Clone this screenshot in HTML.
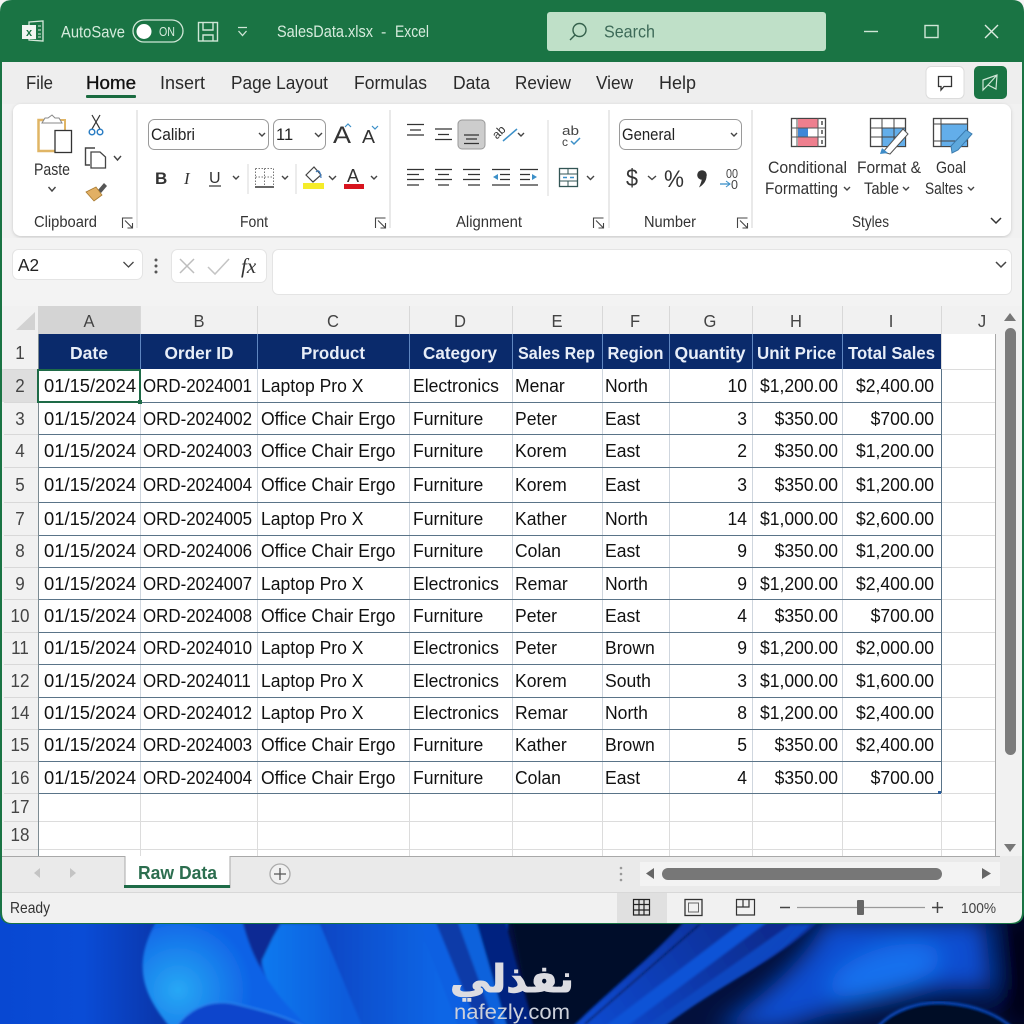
<!DOCTYPE html>
<html><head><meta charset="utf-8"><title>SalesData.xlsx - Excel</title>
<style>
html,body{margin:0;padding:0;background:#fff}
svg{display:block}
text{font-family:"Liberation Sans",sans-serif;fill:#222;font-size:17px;white-space:pre}
.w{fill:#d6ebdd;font-size:17px}
.m{font-size:18.5px;fill:#2a2a2a}
.r{font-size:16.5px;fill:#333}
.g{font-size:15.5px;fill:#333}
.d{font-size:18.4px;fill:#111}
.o{font-size:18.6px;fill:#111;transform-box:fill-box;transform-origin:0 50%;transform:scaleX(.91)}
.t{font-size:18.6px;fill:#111;transform-box:fill-box;transform-origin:0 50%;transform:scaleX(.945)}
.n{font-size:18.6px;fill:#111;text-anchor:end;transform-box:fill-box;transform-origin:100% 50%;transform:scaleX(.943)}
.h{font-size:17.8px;font-weight:bold;fill:#e8eef8;text-anchor:middle}
.ch{font-size:18px;fill:#444;text-anchor:middle;transform-box:fill-box;transform-origin:50% 50%;transform:scaleX(.92)}
.rh{font-size:18.5px;fill:#444;text-anchor:middle;transform-box:fill-box;transform-origin:50% 50%;transform:scaleX(.92)}
.ic{fill:none;stroke:#444;stroke-width:1.4}
.cv{fill:none;stroke:#444;stroke-width:1.4}
</style></head><body>
<svg xmlns="http://www.w3.org/2000/svg" width="1024" height="1024" viewBox="0 0 1024 1024">
<defs>
<filter id="b6" x="-30%" y="-30%" width="160%" height="160%"><feGaussianBlur stdDeviation="5"/></filter>
<filter id="b2" x="-5%" y="-5%" width="110%" height="110%"><feGaussianBlur stdDeviation="1.2"/></filter>
<filter id="b14" x="-50%" y="-50%" width="200%" height="200%"><feGaussianBlur stdDeviation="12"/></filter>
<radialGradient id="sw" cx="178" cy="990" r="75" gradientUnits="userSpaceOnUse"><stop offset="0" stop-color="#28a8f5"/><stop offset="1" stop-color="#0e62e6"/></radialGradient>
<linearGradient id="lf" x1="0" x2="240" y1="0" y2="0" gradientUnits="userSpaceOnUse"><stop offset="0" stop-color="#0848d2"/><stop offset=".35" stop-color="#0a4cd6"/><stop offset=".65" stop-color="#0a38ae"/><stop offset="1" stop-color="#0a2c90"/></linearGradient>
<linearGradient id="bb" x1="320" x2="440" y1="0" y2="0" gradientUnits="userSpaceOnUse"><stop offset="0" stop-color="#0a46c4"/><stop offset="1" stop-color="#0a66e6"/></linearGradient>
<linearGradient id="ba" x1="265" x2="345" y1="0" y2="0" gradientUnits="userSpaceOnUse"><stop offset="0" stop-color="#0f78ee"/><stop offset="1" stop-color="#0d5cdc"/></linearGradient>
<linearGradient id="st" x1="760" y1="924" x2="600" y2="1024" gradientUnits="userSpaceOnUse"><stop offset="0" stop-color="#0a2c90"/><stop offset="1" stop-color="#0b48cc"/></linearGradient>
<filter id="sh" x="-2%" y="-5%" width="104%" height="110%"><feDropShadow dx="0" dy="1" stdDeviation="1.5" flood-color="#000" flood-opacity=".18"/></filter>
</defs>

<!-- wallpaper -->
<rect width="1024" height="1024" fill="#f4f4f4"/>
<rect y="900" width="1024" height="124" fill="#03103c"/>
<rect y="900" width="240" height="124" fill="url(#lf)"/>
<g filter="url(#b2)">
<rect x="238" y="900" width="270" height="130" fill="#0a3fc0"/>
<path d="M508 900H700L640 1024H532Z" fill="#020a2c"/>
<path d="M281 924H320L364 1030H300C282 1005 260 978 262 955Z" fill="url(#ba)"/>
<path d="M242 920H281L262 960L258 976Z" fill="#0a2a94"/>
<path d="M320 920H418L460 1030H364Z" fill="url(#bb)"/>
<path d="M418 920H435L480 1030H460Z" fill="#0d60e2"/>
<path d="M435 920H457L497 1030H480Z" fill="#0a3ba8"/>
<path d="M457 920H476L508 1030H497Z" fill="#0f62dc"/>
<path d="M476 920H505L534 1030H508Z" fill="#062480"/>
<path d="M157 920H242C250 950 262 985 312 1030H172C148 1000 128 970 157 920Z" fill="url(#sw)"/>
<path d="M174 1030C190 1005 215 998 240 1005C265 1011 292 1018 310 1030Z" fill="#0b45cc" stroke="#2a86f0" stroke-width="1.500"/>
<path d="M686 920H820C780 960 720 985 650 1030H570C610 990 650 960 686 920Z" fill="url(#st)"/>
<path d="M745 920L600 1030H622L770 920Z" fill="#0e52d6"/>
<path d="M790 925L640 1030H660C710 990 770 965 810 925Z" fill="#0d46c0"/>
<path d="M700 924L585 1024" stroke="#04154c" stroke-width="1.500"/>
</g>
<g filter="url(#b14)">
<path d="M825 920H985L992 990C940 985 880 995 780 1030H715C770 990 805 960 825 920Z" fill="#0a4ed0"/>
<ellipse cx="885" cy="972" rx="58" ry="24" fill="#1471ee" transform="rotate(-18 885 972)"/>
<rect x="1002" y="915" width="40" height="115" fill="#020618"/>
</g>
<path d="M875 1030C890 1010 920 1000 948 1003C975 1005 1000 1015 1015 1030Z" fill="#030a28" stroke="#0f52d0" stroke-width="2" filter="url(#b2)"/>
<text x="512" y="992" text-anchor="middle" textLength="124" lengthAdjust="spacingAndGlyphs" direction="rtl" style="font-family:'DejaVu Sans',sans-serif;font-weight:bold;font-size:38px;fill:#dcdce2;stroke:#dcdce2;stroke-width:1">نفذلي</text>
<text x="454" y="1019" textLength="116" lengthAdjust="spacingAndGlyphs" style="font-size:21px;fill:#ccd0da">nafezly.com</text>

<!-- window -->
<path d="M0 12Q0 0 12 0H1012Q1024 0 1024 12V912Q1024 924 1012 924H12Q0 924 0 912Z" fill="#1a7444"/>
<path d="M2 62H1022V912Q1022 923 1010 923H12Q2 923 2 912Z" fill="#f1f1f1"/>
<rect x="2" y="62" width="1020" height="42" fill="#eeeeee"/>

<!-- titlebar -->
<path d="M29 22L43 21V41L29 40Z" fill="none" stroke="#d5e8da" stroke-width="1.3"/>
<path d="M22 25H36V39H22Z" fill="#f2f6f2"/><text x="26" y="36" style="font-size:11px;font-weight:bold;fill:#1a7444">x</text>
<path d="M38 26H41M38 30H41M38 34H41M38 37H41" stroke="#d5e8da"/>
<text class="w" x="61" y="37.5" textLength="64" lengthAdjust="spacingAndGlyphs">AutoSave</text>
<rect x="133" y="20" width="50" height="22" rx="11" fill="none" stroke="#cfe6d6" stroke-width="1.3"/>
<circle cx="144" cy="31.500" r="7.500" fill="#fff"/>
<text x="159" y="36" textLength="16" lengthAdjust="spacingAndGlyphs" style="font-size:12.500px;fill:#d6ebdd">ON</text>
<g fill="none" stroke="#cfe6d6" stroke-width="1.4"><rect x="198.500" y="22.500" width="19" height="18.500"/><path d="M203 23V30H213V23M203 41V35H213V41"/></g>
<path d="M238 27.500H247M238.500 31L242.500 35.500L246.500 31" fill="none" stroke="#cfe6d6" stroke-width="1.3"/>
<text class="w" x="277" y="37" textLength="96" lengthAdjust="spacingAndGlyphs" style="font-size:16.500px">SalesData.xlsx</text>
<text class="w" x="381" y="37" style="font-size:16px">-</text>
<text class="w" x="395" y="37" textLength="34" lengthAdjust="spacingAndGlyphs" style="font-size:16.500px">Excel</text>
<rect x="547" y="12" width="279" height="39" rx="3" fill="#bfe0c8"/>
<circle cx="579.500" cy="30" r="6.500" fill="none" stroke="#35614c" stroke-width="1.4"/><path d="M575 35L570 40" stroke="#35614c" stroke-width="1.4"/>
<text x="604" y="37.500" textLength="51" lengthAdjust="spacingAndGlyphs" style="font-size:17.500px;fill:#3d6a58">Search</text>
<path d="M864 31.500H878" stroke="#cfe6d6" stroke-width="1.4"/>
<rect x="925" y="25.500" width="13" height="12" fill="none" stroke="#cfe6d6" stroke-width="1.4"/>
<path d="M985 25L998 38M998 25L985 38" stroke="#dcebe0" stroke-width="1.4"/>

<!-- menu -->
<text class="m" x="26" y="89" textLength="27" lengthAdjust="spacingAndGlyphs">File</text>
<text class="m" x="86" y="89" textLength="50" lengthAdjust="spacingAndGlyphs" style="fill:#111;stroke:#111;stroke-width:.35">Home</text>
<rect x="86" y="95" width="50" height="3" rx="1" fill="#1a6b40"/>
<text class="m" x="160" y="89" textLength="45" lengthAdjust="spacingAndGlyphs">Insert</text>
<text class="m" x="231" y="89" textLength="97" lengthAdjust="spacingAndGlyphs">Page Layout</text>
<text class="m" x="354" y="89" textLength="73" lengthAdjust="spacingAndGlyphs">Formulas</text>
<text class="m" x="453" y="89" textLength="37" lengthAdjust="spacingAndGlyphs">Data</text>
<text class="m" x="515" y="89" textLength="56" lengthAdjust="spacingAndGlyphs">Review</text>
<text class="m" x="596" y="89" textLength="37" lengthAdjust="spacingAndGlyphs">View</text>
<text class="m" x="659" y="89" textLength="37" lengthAdjust="spacingAndGlyphs">Help</text>
<rect x="926" y="66.500" width="38" height="32" rx="5" fill="#fff" stroke="#dcdcdc"/>
<path d="M938.500 76.500H951.500V86.500H944L941 90V86.500H938.500Z" fill="none" stroke="#333" stroke-width="1.300"/>
<rect x="974" y="66" width="33" height="33" rx="5" fill="#1a7444"/>
<path d="M983 80L997 75L996 89L988 85L983 90ZM988 85L997 75" fill="none" stroke="#cfe6d6" stroke-width="1.200"/>

<!-- ribbon -->
<rect x="13" y="104" width="998" height="132" rx="8" fill="#fff" filter="url(#sh)"/>
<g stroke="#e2e2e2" stroke-width="1.500"><path d="M137 110V228M390 110V228M609 110V228M752 110V228"/><path d="M548 120V196M248 164V194M296 164V194" stroke="#e6e6e6"/></g>
<!-- clipboard -->
<path d="M55 120H38.500V151H55" fill="none" stroke="#e0b565" stroke-width="2.500"/><path d="M55 120H65V130" fill="none" stroke="#e0b565" stroke-width="2"/>
<path d="M42 123H62L59 118H55L52 115L48 118H45Z" fill="#fff" stroke="#888" stroke-width="1"/>
<rect x="55" y="130.500" width="16.500" height="22" fill="#fff" stroke="#333" stroke-width="1.300"/>
<text class="r" x="34" y="175" textLength="36" lengthAdjust="spacingAndGlyphs">Paste</text>
<path d="M48.500 187L52 191L55.500 187" class="cv"/>
<path d="M92 115L100 129M100 115L92 129" stroke="#333" stroke-width="1.200"/><circle cx="92" cy="132" r="2.800" fill="none" stroke="#2c7ec4" stroke-width="1.500"/><circle cx="100" cy="132" r="2.800" fill="none" stroke="#2c7ec4" stroke-width="1.500"/>
<path d="M90 165H85.500V148H95" class="ic"/><path d="M91 152H100L105.500 157V168H91Z" fill="#fff" stroke="#444" stroke-width="1.300"/>
<path d="M114 156L117.500 160L121 156" class="cv"/>
<path d="M98 190L104 183L107 186L101 193Z" fill="#555"/><path d="M86 192L96 187L102 195L94 201Z" fill="#e2b064" stroke="#a87a30" stroke-width=".8"/>
<text class="g" x="34" y="227" textLength="63" lengthAdjust="spacingAndGlyphs">Clipboard</text>
<g id="lc" class="ic" style="stroke-width:1.100"><path d="M122.500 228V218H132.500M125 220.500L132.500 228M132.500 223V228H127.500"/></g>
<!-- font -->
<rect x="148.500" y="119.500" width="120" height="30" rx="6" fill="#fff" stroke="#9a9a9a"/>
<text x="151" y="140" textLength="44" lengthAdjust="spacingAndGlyphs" style="font-size:16.500px">Calibri</text>
<path d="M259 133L262 136L265 133" class="cv"/>
<rect x="273.500" y="119.500" width="52" height="30" rx="6" fill="#fff" stroke="#9a9a9a"/>
<text x="276" y="140" style="font-size:16.500px">11</text>
<path d="M315 133L318.500 136.500L322 133" class="cv"/>
<text x="333" y="143" textLength="18" lengthAdjust="spacingAndGlyphs" style="font-size:24px;fill:#333">A</text><path d="M345 127L348 124L351 127" stroke="#3c90c8" fill="none" stroke-width="1.200"/>
<text x="362" y="143" textLength="13" lengthAdjust="spacingAndGlyphs" style="font-size:18px;fill:#333">A</text><path d="M372 126L375 129L378 126" stroke="#3c90c8" fill="none" stroke-width="1.200"/>
<text x="155" y="184" style="font-size:17px;font-weight:bold;fill:#333">B</text>
<text x="184" y="184" style="font-size:17px;font-style:italic;font-family:'Liberation Serif',serif;fill:#333">I</text>
<text x="209" y="183" style="font-size:16px;fill:#333">U</text><path d="M209 186H221" stroke="#333" stroke-width="1.200"/>
<path d="M233 176L236 179L239 176" class="cv"/>
<path d="M255.500 168.500H273.500V186M255.500 168.500V186M264.500 168.500V186M255.500 177H273.500" fill="none" stroke="#777" stroke-dasharray="1.500 1.500"/><path d="M255 187H274" stroke="#333" stroke-width="1.500"/>
<path d="M282 176L285 179L288 176" class="cv"/>
<path d="M306 175L314 167L321 175L313 182Z" fill="#fff" stroke="#444" stroke-width="1.200"/><path d="M316 172Q320 168 321 178" stroke="#3c78b8" fill="none" stroke-width="1.200"/>
<rect x="303" y="183" width="21" height="6" fill="#f5ec2a"/>
<path d="M329 176L332.500 179.500L336 176" class="cv"/>
<text x="347" y="182" style="font-size:18px;fill:#333">A</text><rect x="344" y="184" width="20" height="5" fill="#d8141e"/>
<path d="M371 176L374 179L377 176" class="cv"/>
<text class="g" x="240" y="227" textLength="28" lengthAdjust="spacingAndGlyphs">Font</text>
<use href="#lc" x="253"/>
<!-- alignment -->
<path d="M407 124.500H424M410 130H421M407 135H424M435 129H452M438 134.500H449M435 139.500H452" stroke="#333" stroke-width="1.300" fill="none"/>
<rect x="458" y="120" width="27" height="29" rx="4" fill="#cdcdcd" stroke="#999"/>
<path d="M464 135H479M466 139H477M464 143.500H479" stroke="#333" stroke-width="1.300"/>
<text x="492" y="136" transform="rotate(-45 499 132)" style="font-size:12px;fill:#333">ab</text><path d="M503 141L517 129" stroke="#3c90c8" stroke-width="1.500"/>
<path d="M518 133L521 136L524 133" class="cv"/>
<text x="562" y="135" textLength="17" lengthAdjust="spacingAndGlyphs" style="font-size:13px;fill:#444">ab</text><text x="562" y="146" style="font-size:12px;fill:#444">c</text><path d="M571 141L574 144L580 138" fill="none" stroke="#3c90c8" stroke-width="1.500"/>
<path d="M407 169.500H424M407 174.500H419M407 179.500H424M407 185H419M435 169.500H452M438 174.500H449M435 179.500H452M438 185H449M463 169.500H480M468 174.500H480M463 179.500H480M468 185H480M492 169.500H510M500 174.500H510M500 179.500H510M492 185H510M520 169.500H538M520 174.500H530M520 179.500H530M520 185H538" fill="none" stroke="#333" stroke-width="1.200"/>
<path d="M493 177L498 174V180ZM537 177L532 174V180Z" fill="#3c90c8"/>
<rect x="559.500" y="168.500" width="18" height="18" fill="#fff" stroke="#355" stroke-width="1.300"/><path d="M560 174H577M560 181H577M568 168V174M568 181V187" stroke="#355"/><path d="M563 177.500H567M570 177.500H574" stroke="#3c90c8" stroke-width="1.500"/>
<path d="M587 176L590.500 179.500L594 176" class="cv"/>
<text class="g" x="456" y="227" textLength="66" lengthAdjust="spacingAndGlyphs">Alignment</text>
<use href="#lc" x="471"/>
<!-- number -->
<rect x="619.500" y="119.500" width="122" height="30" rx="6" fill="#fff" stroke="#9a9a9a"/>
<text x="622" y="140" textLength="53" lengthAdjust="spacingAndGlyphs" style="font-size:16.500px">General</text>
<path d="M731 133L734 136L737 133" class="cv"/>
<text x="626" y="186" textLength="12" lengthAdjust="spacingAndGlyphs" style="font-size:24px;fill:#333">$</text>
<path d="M648 176L652 179.500L656 176" class="cv"/>
<text x="664" y="187" textLength="20" lengthAdjust="spacingAndGlyphs" style="font-size:24px;fill:#333">%</text>
<circle cx="702" cy="175" r="4.800" fill="#333"/><path d="M706.500 175C707 181 703 185 699 187.500C701 183 702 180 702 177Z" fill="#333"/>
<text x="726" y="178" textLength="12" lengthAdjust="spacingAndGlyphs" style="font-size:12.500px;fill:#444">00</text><text x="731" y="189" style="font-size:12.500px;fill:#444">0</text>
<path d="M720 184H730" stroke="#3c90c8" stroke-width="1.300"/><path d="M726 181L730 184L726 187" fill="none" stroke="#3c90c8"/>
<text class="g" x="644" y="227" textLength="52" lengthAdjust="spacingAndGlyphs">Number</text>
<use href="#lc" x="615"/>
<!-- styles -->
<rect x="791.500" y="118.500" width="34" height="28" fill="#fff" stroke="#444" stroke-width="1.300"/>
<rect x="798" y="119" width="20" height="9" fill="#ee7f8e"/><rect x="798" y="137" width="20" height="9" fill="#ee7f8e"/><rect x="798" y="128" width="10" height="9" fill="#3f87d8"/>
<path d="M791 128H826M791 137H826M797 118V147M818 118V147" stroke="#555"/><path d="M822 121V125M822 130V134M822 140V144" stroke="#333" stroke-width="1.300"/>
<rect x="870.500" y="118.500" width="35" height="28" fill="#fff" stroke="#444" stroke-width="1.300"/>
<rect x="882" y="128" width="23" height="18" fill="#63aeea"/>
<path d="M870 128H906M870 137H906M882 118V147M894 118V147" stroke="#444"/>
<path d="M883 152L903 129L908 134L890 154Z" fill="#fff" stroke="#555"/><path d="M882 148L888 153L880 154Z" fill="#3e8cc8"/>
<rect x="933.500" y="118.500" width="34" height="28" fill="#fff" stroke="#444" stroke-width="1.300"/>
<rect x="941" y="124" width="26" height="22" fill="#63aeea"/>
<path d="M933 124H968M933 141H968M941 118V147" stroke="#444"/>
<path d="M951 146L966 130L972 134L958 150L952 153Z" fill="#5ea8dc" stroke="#3b7cb0"/>
<text class="r" x="768" y="173" textLength="79" lengthAdjust="spacingAndGlyphs">Conditional</text>
<text class="r" x="765" y="194" textLength="73" lengthAdjust="spacingAndGlyphs">Formatting</text><path d="M844 187L847 190L850 187" class="cv"/>
<text class="r" x="857" y="173" textLength="64" lengthAdjust="spacingAndGlyphs">Format &amp;</text>
<text class="r" x="864" y="194" textLength="35" lengthAdjust="spacingAndGlyphs">Table</text><path d="M903 187L906 190L909 187" class="cv"/>
<text class="r" x="936" y="173" textLength="30" lengthAdjust="spacingAndGlyphs">Goal</text>
<text class="r" x="925" y="194" textLength="38" lengthAdjust="spacingAndGlyphs">Saltes</text><path d="M968 187L971 190L974 187" class="cv"/>
<text class="g" x="852" y="227" textLength="37" lengthAdjust="spacingAndGlyphs">Styles</text>
<path d="M991 218L996 223L1001 218" fill="none" stroke="#333" stroke-width="1.500"/>

<!-- formula bar -->
<rect x="2" y="238" width="1020" height="68" fill="#f3f3f3"/>
<rect x="12.500" y="249.500" width="130" height="30" rx="6" fill="#fff" stroke="#e4e4e4"/>
<text x="18" y="271" textLength="21" lengthAdjust="spacingAndGlyphs" style="font-size:17.500px">A2</text>
<path d="M123.500 262L128.500 267L133.500 262" fill="none" stroke="#444" stroke-width="1.300"/>
<circle cx="156" cy="260" r="1.500" fill="#555"/><circle cx="156" cy="266" r="1.500" fill="#555"/><circle cx="156" cy="272" r="1.500" fill="#555"/>
<rect x="171.500" y="249.500" width="95" height="33" rx="6" fill="#fff" stroke="#e4e4e4"/>
<path d="M180 259L194 273M194 259L180 273" stroke="#bdbdbd" stroke-width="1.500"/>
<path d="M208 267L215 274L229 259" fill="none" stroke="#c4c4c4" stroke-width="1.500"/>
<text x="241" y="273" style="font-size:21px;font-style:italic;font-family:'Liberation Serif',serif;fill:#333">fx</text>
<rect x="272.500" y="249.500" width="739" height="45" rx="6" fill="#fff" stroke="#e4e4e4"/>
<path d="M996 262L1001 267L1006 262" fill="none" stroke="#444" stroke-width="1.500"/>

<!-- grid -->
<rect x="2" y="306" width="1020" height="550" fill="#f1f1f1"/>
<rect x="38" y="334" width="958" height="522" fill="#fff"/>
<rect x="38" y="306" width="102" height="28" fill="#d4d4d4"/>
<rect x="2" y="369" width="36" height="33" fill="#dedede"/>
<path d="M16 330L35 312V330Z" fill="#d2d2d2"/>
<g stroke="#d8d8d8" fill="none">
<path d="M140.500 306V334M257.500 306V334M409.500 306V334M512.500 306V334M602.500 306V334M669.500 306V334M752.500 306V334M842.500 306V334M941.500 306V334"/>
<path d="M4 369.500H38M4 402.500H38M4 434.500H38M4 467.500H38M4 502.500H38M4 535.500H38M4 567.500H38M4 599.500H38M4 632.500H38M4 664.500H38M4 697.500H38M4 729.500H38M4 761.500H38M4 793.500H38M4 821.500H38M4 849.500H38"/>
</g>
<text class="ch" x="89" y="327">A</text><text class="ch" x="199" y="327">B</text><text class="ch" x="333" y="327">C</text><text class="ch" x="460" y="327">D</text><text class="ch" x="557" y="327">E</text><text class="ch" x="635" y="327">F</text><text class="ch" x="710" y="327">G</text><text class="ch" x="796" y="327">H</text><text class="ch" x="891" y="327">I</text><text class="ch" x="982" y="327">J</text>
<text class="rh" x="20" y="359">1</text><text class="rh" x="20" y="392">2</text><text class="rh" x="20" y="425">3</text><text class="rh" x="20" y="457">4</text><text class="rh" x="20" y="491">5</text><text class="rh" x="20" y="525">7</text><text class="rh" x="20" y="557">8</text><text class="rh" x="20" y="590">9</text><text class="rh" x="20" y="622">10</text><text class="rh" x="20" y="654">11</text><text class="rh" x="20" y="687">12</text><text class="rh" x="20" y="719">14</text><text class="rh" x="20" y="751">15</text><text class="rh" x="20" y="784">16</text><text class="rh" x="20" y="813">17</text><text class="rh" x="20" y="841">18</text>
<rect x="38" y="334" width="903" height="35" fill="#0a2a6b"/>
<g stroke="#dcdcdc" fill="none">
<path d="M140.500 793V856M257.500 793V856M409.500 793V856M512.500 793V856M602.500 793V856M669.500 793V856M752.500 793V856M842.500 793V856M941.500 334V856"/>
<path d="M38 821.500H996M38 849.500H996M941 369.500H996M941 402.500H996M941 434.500H996M941 467.500H996M941 502.500H996M941 535.500H996M941 567.500H996M941 599.500H996M941 632.500H996M941 664.500H996M941 697.500H996M941 729.500H996M941 761.500H996M941 793.500H996"/>
</g>
<path d="M140.500 369V793M257.500 369V793M409.500 369V793M512.500 369V793M602.500 369V793M669.500 369V793M752.500 369V793M842.500 369V793" stroke="#cfd6de" fill="none"/>
<path d="M38 402.500H941M38 434.500H941M38 467.500H941M38 502.500H941M38 535.500H941M38 567.500H941M38 599.500H941M38 632.500H941M38 664.500H941M38 697.500H941M38 729.500H941M38 761.500H941M38 793.500H941M941.500 369V793" stroke="#5a7488" fill="none"/>
<path d="M38.500 334V856" stroke="#7d8b92" fill="none"/>
<path d="M140.500 334V369M257.500 334V369M409.500 334V369M512.500 334V369M602.500 334V369M669.500 334V369M752.500 334V369M842.500 334V369" stroke="#5f86c0" fill="none"/>
<rect x="38" y="370" width="102" height="32" fill="none" stroke="#1e6b47" stroke-width="2"/>
<rect x="138" y="400" width="4" height="4" fill="#1e6b47"/>
<rect x="938" y="791" width="3" height="3" fill="#2a5fa0"/>

<text class="h" x="89" y="359" textLength="38" lengthAdjust="spacingAndGlyphs">Date</text>
<text class="h" x="199" y="359" textLength="69" lengthAdjust="spacingAndGlyphs">Order ID</text>
<text class="h" x="333" y="359" textLength="64" lengthAdjust="spacingAndGlyphs">Product</text>
<text class="h" x="460" y="359" textLength="74" lengthAdjust="spacingAndGlyphs">Category</text>
<text class="h" x="556.500" y="359" textLength="77" lengthAdjust="spacingAndGlyphs">Sales Rep</text>
<text class="h" x="635.500" y="359" textLength="56" lengthAdjust="spacingAndGlyphs">Region</text>
<text class="h" x="710" y="359" textLength="71" lengthAdjust="spacingAndGlyphs">Quantity</text>
<text class="h" x="796.500" y="359" textLength="79" lengthAdjust="spacingAndGlyphs">Unit Price</text>
<text class="h" x="891.500" y="359" textLength="87" lengthAdjust="spacingAndGlyphs">Total Sales</text>

<text class="d" x="44" y="392">01/15/2024</text><text class="o" x="143" y="392">ORD-2024001</text><text class="t" x="261" y="392">Laptop Pro X</text><text class="t" x="413" y="392">Electronics</text><text class="t" x="515" y="392">Menar</text><text class="t" x="605" y="392">North</text><text class="n" x="747" y="392">10</text><text class="n" x="838" y="392">$1,200.00</text><text class="n" x="934" y="392">$2,400.00</text>
<text class="d" x="44" y="425">01/15/2024</text><text class="o" x="143" y="425">ORD-2024002</text><text class="t" x="261" y="425">Office Chair Ergo</text><text class="t" x="413" y="425">Furniture</text><text class="t" x="515" y="425">Peter</text><text class="t" x="605" y="425">East</text><text class="n" x="747" y="425">3</text><text class="n" x="838" y="425">$350.00</text><text class="n" x="934" y="425">$700.00</text>
<text class="d" x="44" y="457">01/15/2024</text><text class="o" x="143" y="457">ORD-2024003</text><text class="t" x="261" y="457">Office Chair Ergo</text><text class="t" x="413" y="457">Furniture</text><text class="t" x="515" y="457">Korem</text><text class="t" x="605" y="457">East</text><text class="n" x="747" y="457">2</text><text class="n" x="838" y="457">$350.00</text><text class="n" x="934" y="457">$1,200.00</text>
<text class="d" x="44" y="491">01/15/2024</text><text class="o" x="143" y="491">ORD-2024004</text><text class="t" x="261" y="491">Office Chair Ergo</text><text class="t" x="413" y="491">Furniture</text><text class="t" x="515" y="491">Korem</text><text class="t" x="605" y="491">East</text><text class="n" x="747" y="491">3</text><text class="n" x="838" y="491">$350.00</text><text class="n" x="934" y="491">$1,200.00</text>
<text class="d" x="44" y="525">01/15/2024</text><text class="o" x="143" y="525">ORD-2024005</text><text class="t" x="261" y="525">Laptop Pro X</text><text class="t" x="413" y="525">Furniture</text><text class="t" x="515" y="525">Kather</text><text class="t" x="605" y="525">North</text><text class="n" x="747" y="525">14</text><text class="n" x="838" y="525">$1,000.00</text><text class="n" x="934" y="525">$2,600.00</text>
<text class="d" x="44" y="557">01/15/2024</text><text class="o" x="143" y="557">ORD-2024006</text><text class="t" x="261" y="557">Office Chair Ergo</text><text class="t" x="413" y="557">Furniture</text><text class="t" x="515" y="557">Colan</text><text class="t" x="605" y="557">East</text><text class="n" x="747" y="557">9</text><text class="n" x="838" y="557">$350.00</text><text class="n" x="934" y="557">$1,200.00</text>
<text class="d" x="44" y="590">01/15/2024</text><text class="o" x="143" y="590">ORD-2024007</text><text class="t" x="261" y="590">Laptop Pro X</text><text class="t" x="413" y="590">Electronics</text><text class="t" x="515" y="590">Remar</text><text class="t" x="605" y="590">North</text><text class="n" x="747" y="590">9</text><text class="n" x="838" y="590">$1,200.00</text><text class="n" x="934" y="590">$2,400.00</text>
<text class="d" x="44" y="622">01/15/2024</text><text class="o" x="143" y="622">ORD-2024008</text><text class="t" x="261" y="622">Office Chair Ergo</text><text class="t" x="413" y="622">Furniture</text><text class="t" x="515" y="622">Peter</text><text class="t" x="605" y="622">East</text><text class="n" x="747" y="622">4</text><text class="n" x="838" y="622">$350.00</text><text class="n" x="934" y="622">$700.00</text>
<text class="d" x="44" y="654">01/15/2024</text><text class="o" x="143" y="654">ORD-2024010</text><text class="t" x="261" y="654">Laptop Pro X</text><text class="t" x="413" y="654">Electronics</text><text class="t" x="515" y="654">Peter</text><text class="t" x="605" y="654">Brown</text><text class="n" x="747" y="654">9</text><text class="n" x="838" y="654">$1,200.00</text><text class="n" x="934" y="654">$2,000.00</text>
<text class="d" x="44" y="687">01/15/2024</text><text class="o" x="143" y="687">ORD-2024011</text><text class="t" x="261" y="687">Laptop Pro X</text><text class="t" x="413" y="687">Electronics</text><text class="t" x="515" y="687">Korem</text><text class="t" x="605" y="687">South</text><text class="n" x="747" y="687">3</text><text class="n" x="838" y="687">$1,000.00</text><text class="n" x="934" y="687">$1,600.00</text>
<text class="d" x="44" y="719">01/15/2024</text><text class="o" x="143" y="719">ORD-2024012</text><text class="t" x="261" y="719">Laptop Pro X</text><text class="t" x="413" y="719">Electronics</text><text class="t" x="515" y="719">Remar</text><text class="t" x="605" y="719">North</text><text class="n" x="747" y="719">8</text><text class="n" x="838" y="719">$1,200.00</text><text class="n" x="934" y="719">$2,400.00</text>
<text class="d" x="44" y="751">01/15/2024</text><text class="o" x="143" y="751">ORD-2024003</text><text class="t" x="261" y="751">Office Chair Ergo</text><text class="t" x="413" y="751">Furniture</text><text class="t" x="515" y="751">Kather</text><text class="t" x="605" y="751">Brown</text><text class="n" x="747" y="751">5</text><text class="n" x="838" y="751">$350.00</text><text class="n" x="934" y="751">$2,400.00</text>
<text class="d" x="44" y="784">01/15/2024</text><text class="o" x="143" y="784">ORD-2024004</text><text class="t" x="261" y="784">Office Chair Ergo</text><text class="t" x="413" y="784">Furniture</text><text class="t" x="515" y="784">Colan</text><text class="t" x="605" y="784">East</text><text class="n" x="747" y="784">4</text><text class="n" x="838" y="784">$350.00</text><text class="n" x="934" y="784">$700.00</text>

<!-- vertical scrollbar -->
<path d="M995.500 334V856" stroke="#a8a8a8" fill="none"/>
<rect x="996" y="306" width="26" height="550" fill="#f1f1f1"/>
<path d="M1004 321L1010 313L1016 321Z" fill="#777"/>
<rect x="1005" y="328" width="11" height="427" rx="5.500" fill="#7b7b7b"/>
<path d="M1004 844H1016L1010 852Z" fill="#777"/>

<!-- tabs -->
<rect x="2" y="856" width="1020" height="37" fill="#eaeaea"/>
<path d="M2 856.500H1000" stroke="#a8a8a8"/>
<path d="M34 873L40 868V878Z" fill="#c4c4c4"/><path d="M76 873L70 868V878Z" fill="#c4c4c4"/>
<rect x="125" y="856" width="105" height="31" fill="#fff"/>
<path d="M125 856V888M230 856V888" stroke="#aaa"/><rect x="124" y="885" width="106" height="3" fill="#1e6b47"/>
<text x="138" y="879" textLength="79" lengthAdjust="spacingAndGlyphs" style="font-size:18.500px;font-weight:bold;fill:#2c6e4f">Raw Data</text>
<circle cx="280" cy="874" r="10" fill="#f1f1f1" stroke="#aaa" stroke-width="1.300"/><path d="M274 874H286M280 868V880" stroke="#555" stroke-width="1.300"/>
<circle cx="621" cy="868" r="1.300" fill="#999"/><circle cx="621" cy="874" r="1.300" fill="#999"/><circle cx="621" cy="880" r="1.300" fill="#999"/>
<rect x="640" y="862" width="360" height="24" fill="#f3f3f3"/>
<path d="M646 873.500L654 868V879Z" fill="#666"/>
<rect x="662" y="868" width="280" height="12" rx="6" fill="#777"/>
<path d="M991 873.500L982 868V879Z" fill="#666"/>

<!-- status -->
<path d="M2 892.500H1022" stroke="#d8d8d8"/>
<text x="10" y="913" textLength="40" lengthAdjust="spacingAndGlyphs" style="font-size:16px;fill:#333">Ready</text>
<rect x="617" y="893" width="50" height="30" fill="#e0e0e0"/>
<path d="M633.500 899.500H649.500V915H633.500ZM639 899.500V915M644 899.500V915M633.500 904.500H649.500M633.500 910H649.500" fill="none" stroke="#222" stroke-width="1.200"/>
<rect x="685" y="899.500" width="17" height="16" fill="none" stroke="#333" stroke-width="1.300"/><rect x="688.500" y="903" width="10" height="9" fill="none" stroke="#666"/>
<path d="M736.500 899.500H754.500V915H736.500ZM736.500 907H749V899.500M743 899.500V907" fill="none" stroke="#333" stroke-width="1.200"/>
<path d="M780 907.500H790" stroke="#444" stroke-width="1.500"/>
<path d="M797 907.500H925" stroke="#999" stroke-width="1.300"/>
<rect x="857" y="900" width="7" height="15" rx="1" fill="#666"/>
<path d="M932 907.500H943M937.500 902V913" stroke="#444" stroke-width="1.500"/>
<text x="961" y="913" textLength="35" lengthAdjust="spacingAndGlyphs" style="font-size:15px;fill:#444">100%</text>
</svg>
</body></html>
